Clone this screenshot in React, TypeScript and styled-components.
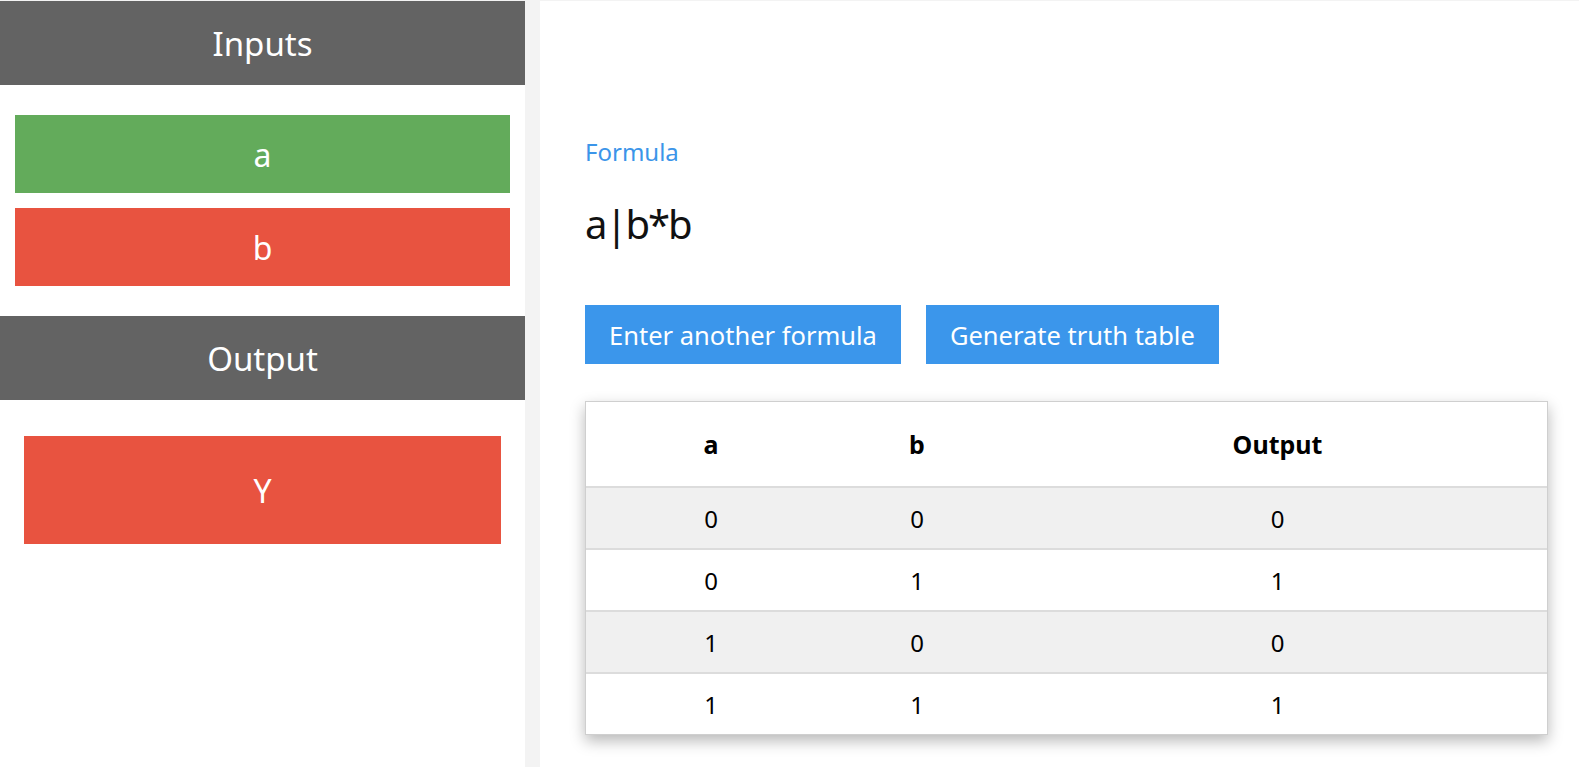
import styled, { createGlobalStyle } from "styled-components";

const inputs = [
  { name: "a", on: true },
  { name: "b", on: false },
];

const rows = [
  [0, 0, 0],
  [0, 1, 1],
  [1, 0, 0],
  [1, 1, 1],
];

export default function App() {
  return (
    <>
      <GlobalStyle />
      <Page>
        <Sidebar>
          <SectionHeader>Inputs</SectionHeader>
          <InputList>
            {inputs.map((input) => (
              <Toggle key={input.name} $on={input.on}>
                {input.name}
              </Toggle>
            ))}
          </InputList>
          <SectionHeader>Output</SectionHeader>
          <OutputBox>
            <OutputLamp $on={false}>Y</OutputLamp>
          </OutputBox>
        </Sidebar>
        <Main>
          <Label>Formula</Label>
          <FormulaText>a|b*b</FormulaText>
          <ButtonRow>
            <ActionButton>Enter another formula</ActionButton>
            <ActionButton>Generate truth table</ActionButton>
          </ButtonRow>
          <TableCard>
            <Row $head>
              <Cell>a</Cell>
              <Cell>b</Cell>
              <Cell $last>Output</Cell>
            </Row>
            {rows.map((r, i) => (
              <Row key={i} $shade={i % 2 === 0}>
                <Cell>{r[0]}</Cell>
                <Cell>{r[1]}</Cell>
                <Cell $last>{r[2]}</Cell>
              </Row>
            ))}
          </TableCard>
        </Main>
      </Page>
    </>
  );
}

const GlobalStyle = createGlobalStyle`
  body {
    margin: 0;
    background: #f3f3f3;
    font-family: "Noto Sans", "Open Sans", sans-serif;
  }
`;

const Page = styled.div`
  display: flex;
  gap: 15px;
  padding-top: 1px;
  min-height: 766px;
`;

const Sidebar = styled.div`
  width: 525px;
  flex-shrink: 0;
  background: #fff;
`;

const SectionHeader = styled.div`
  height: 84px;
  background: #636363;
  color: #fff;
  font-size: 33px;
  display: flex;
  align-items: center;
  justify-content: center;
`;

const InputList = styled.div`
  display: flex;
  flex-direction: column;
  gap: 15px;
  padding: 30px 15px 30px;
`;

const Toggle = styled.div<{ $on: boolean }>`
  height: 78px;
  background: ${(p) => (p.$on ? "#63ab5b" : "#e85340")};
  color: #fff;
  font-size: 32px;
  display: flex;
  align-items: center;
  justify-content: center;
`;

const OutputBox = styled.div`
  padding: 36px 24px;
`;

const OutputLamp = styled.div<{ $on: boolean }>`
  height: 108px;
  background: ${(p) => (p.$on ? "#63ab5b" : "#e85340")};
  color: #fff;
  font-size: 32px;
  display: flex;
  align-items: center;
  justify-content: center;
`;

const Main = styled.div`
  flex: 1;
  background: #fff;
  padding: 136px 31px 0 45px;
`;

const Label = styled.div`
  color: #3b95e9;
  font-size: 24px;
  line-height: 30px;
`;

const FormulaText = styled.div`
  margin-top: 30px;
  font-size: 40px;
  line-height: 54px;
  letter-spacing: -2px;
  color: #111;
`;

const ButtonRow = styled.div`
  display: flex;
  gap: 25px;
  margin-top: 54px;
`;

const ActionButton = styled.button`
  height: 59px;
  padding: 0 24px;
  border: none;
  background: #3b96eb;
  color: #fff;
  font-family: "Noto Sans", "Open Sans", sans-serif;
  font-size: 25.5px;
  cursor: pointer;
`;

const TableCard = styled.div`
  margin-top: 37px;
  border: 1px solid #cfcfcf;
  box-shadow: 0 6px 14px rgba(0, 0, 0, 0.28);
  background: #fff;
  font-family: "Noto Sans", "Open Sans", sans-serif;
  font-size: 24px;
  color: #000;
`;

const Row = styled.div<{ $head?: boolean; $shade?: boolean }>`
  display: grid;
  grid-template-columns: 250px 162px 1fr;
  align-items: center;
  height: ${(p) => (p.$head ? "84px" : "60px")};
  background: ${(p) => (p.$shade ? "#f0f0f0" : "#fff")};
  font-weight: ${(p) => (p.$head ? 700 : 400)};
  font-size: ${(p) => (p.$head ? "25px" : "24px")};
  & + & {
    border-top: 2px solid #dcdcdc;
  }
`;

const Cell = styled.div<{ $last?: boolean }>`
  text-align: center;
  padding-left: ${(p) => (p.$last ? "10px" : "0")};
`;
